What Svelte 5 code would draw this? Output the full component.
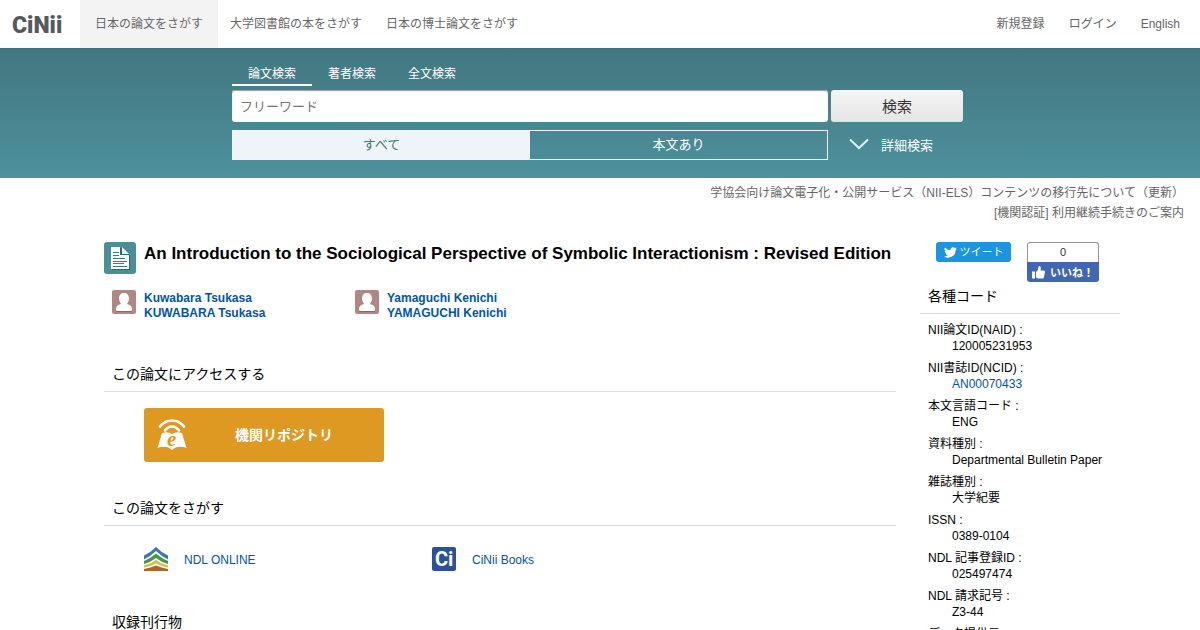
<script lang="ts">
  const siteLinks = ["日本の論文をさがす", "大学図書館の本をさがす", "日本の博士論文をさがす"];
  const userLinks = ["新規登録", "ログイン", "English"];
  const searchTabs = ["論文検索", "著者検索", "全文検索"];

  const authors = [
    ["Kuwabara Tsukasa", "KUWABARA Tsukasa"],
    ["Yamaguchi Kenichi", "YAMAGUCHI Kenichi"],
  ];

  const codes = [
    { label: "NII論文ID(NAID)", value: "120005231953" },
    { label: "NII書誌ID(NCID)", value: "AN00070433", link: true },
    { label: "本文言語コード", value: "ENG" },
    { label: "資料種別", value: "Departmental Bulletin Paper" },
    { label: "雑誌種別", value: "大学紀要" },
    { label: "ISSN", value: "0389-0104" },
    { label: "NDL 記事登録ID", value: "025497474" },
    { label: "NDL 請求記号", value: "Z3-44" },
    { label: "データ提供元", value: "NDL  IR" },
  ];

  let activeTab = $state(0);
  let scope = $state("all");
  let keyword = $state("");
</script>

<header class="topbar">
  <a class="logo" href="/" aria-label="CiNii">
    <svg width="56" height="24" viewBox="0 0 56 24" aria-hidden="true">
      <text x="0" y="21">CiNii</text>
    </svg>
  </a>
  <nav class="site-nav">
    {#each siteLinks as label, i}
      <a href="#{i}" class:active={i === 0}>{label}</a>
    {/each}
  </nav>
  <nav class="user-nav">
    {#each userLinks as label}
      <a href="#user">{label}</a>
    {/each}
  </nav>
</header>

<section class="hero">
  <form class="search" onsubmit={(e) => e.preventDefault()}>
    <div class="tabs">
      {#each searchTabs as tab, i}
        <button type="button" class="tab" class:active={activeTab === i} onclick={() => (activeTab = i)}>
          {tab}
        </button>
      {/each}
    </div>
    <div class="search-row">
      <input class="keyword" type="text" placeholder="フリーワード" aria-label="フリーワード" bind:value={keyword} />
      <button class="submit" type="submit">検索</button>
    </div>
    <div class="search-row">
      <div class="scope">
        <label class:checked={scope === "all"}>
          <input type="radio" name="scope" value="all" bind:group={scope} />すべて
        </label>
        <label class:checked={scope === "fulltext"}>
          <input type="radio" name="scope" value="fulltext" bind:group={scope} />本文あり
        </label>
      </div>
      <button class="advanced" type="button">
        <svg width="20" height="12" viewBox="0 0 20 12" aria-hidden="true">
          <path d="M1 1.5L10 10L19 1.5" fill="none" stroke="#d9f6fb" stroke-width="2" />
        </svg>
        詳細検索
      </button>
    </div>
  </form>
</section>

<div class="notices">
  <a href="#els">学協会向け論文電子化・公開サービス（NII-ELS）コンテンツの移行先について（更新）</a>
  <a href="#auth">[機関認証] 利用継続手続きのご案内</a>
</div>

<div class="content">
  <main>
    <div class="title-row">
      <svg width="32" height="32" viewBox="0 0 32 32" aria-hidden="true">
        <rect width="32" height="32" rx="3" fill="#4b8e98" />
        <path d="M8 6H18L26 14V28H8Z" fill="#2f6871" />
        <path d="M7 5H16V13H25V27H7Z" fill="#fff" />
        <path d="M18 5L25 12H18Z" fill="#fff" />
        <path d="M9 10.5H15M9 13.5H15M9 16.5H21M9 19.5H23M9 21.5H20M9 24.5H23" stroke="#3c7c86" />
      </svg>
      <h1>An Introduction to the Sociological Perspective of Symbolic Interactionism : Revised Edition</h1>
    </div>

    <ul class="authors">
      {#each authors as names}
        <li>
          <svg width="24" height="24" viewBox="0 0 24 24" aria-hidden="true">
            <rect width="24" height="24" rx="2" fill="#b08784" />
            <path
              d="M12 4C15 4 17 6 17 9.500C17 12 16 14 14.500 15V16C18 17 20 17.500 20 19.500V20.500Q20 22 19 22H5Q4 22 4 20.500V19.500C4 17.500 6 17 9.500 16V15C8 14 7 12 7 9.500C7 6 9 4 12 4Z"
              fill="#8d6562"
            />
            <path
              d="M12 3C15 3 17 5 17 8.500C17 11 16 13 15 14C18 15 20 16 20 18.500V19.500Q20 21 19 21H5Q4 21 4 19.500V18.500C4 16 6 15 9 14C8 13 7 11 7 8.500C7 5 9 3 12 3Z"
              fill="#fff"
            />
          </svg>
          <a href="#author">
            {#each names as name}<span>{name}</span>{/each}
          </a>
        </li>
      {/each}
    </ul>

    <section>
      <h2>この論文にアクセスする</h2>
      <a class="repository" href="#repository">
        <svg width="32" height="34" viewBox="0 0 32 34" aria-hidden="true">
          <g fill="none" stroke="#fff" stroke-width="2.6" stroke-linecap="round">
            <path d="M4 8.500Q9 2.500 16 2.500T28 8.500" />
            <path d="M9 12.500Q12 8.500 16 8.500T23 12.500" />
          </g>
          <path d="M6 15Q12 13 16 16Q20 13 26 15L30.500 30Q27 28 21 29Q18 30 16 32Q14 30 11 29Q5 28 1.500 30Z" fill="#fff" />
          <text class="e-mark" x="11" y="28">e</text>
        </svg>
        <span>機関リポジトリ</span>
      </a>
    </section>

    <section>
      <h2>この論文をさがす</h2>
      <ul class="finders">
        <li>
          <svg width="24" height="24" viewBox="0 0 24 24" aria-hidden="true">
            <path d="M0 8.500Q6 6 12 0Q18 6 24 8.500V12.500Q17 9 12 4Q7 9 0 12.500Z" fill="#3f79a9" />
            <path d="M0 14Q7 11 12 6.500Q17 11 24 14V17Q17 15 12 11Q7 15 0 17Z" fill="#4b9250" />
            <path d="M0 18.500Q7 17 12 13Q17 17 24 18.500V20.500Q17 19 12 16.500Q7 19 0 20.500Z" fill="#d7bd41" />
            <path d="M0 22Q7 20.500 12 18.500Q17 20.500 24 22V24H0Z" fill="#ad652e" />
          </svg>
          <a href="#ndl">NDL ONLINE</a>
        </li>
        <li>
          <svg width="24" height="24" viewBox="0 0 24 24" aria-hidden="true">
            <rect width="24" height="24" rx="2" fill="#2b5299" />
            <text class="books-mark" x="3" y="19">Ci</text>
          </svg>
          <a href="#books">CiNii Books</a>
        </li>
      </ul>
    </section>

    <section>
      <h2>収録刊行物</h2>
    </section>
  </main>

  <aside>
    <div class="social">
      <a class="tweet" href="#tweet">
        <svg width="13" height="11" viewBox="0 0 24 20" aria-hidden="true">
          <path
            d="M24 2.400a10 10 0 0 1-2.800.8A5 5 0 0 0 23.300.4a10 10 0 0 1-3.100 1.200A5 5 0 0 0 11.800 6 14 14 0 0 1 1.700.9a5 5 0 0 0 1.500 6.600A5 5 0 0 1 1 6.900a5 5 0 0 0 4 4.900 5 5 0 0 1-2.200.1 5 5 0 0 0 4.600 3.400A10 10 0 0 1 0 17.300 14 14 0 0 0 21.500 4.900 10 10 0 0 0 24 2.400Z"
            fill="#fff"
          />
        </svg>
        ツイート
      </a>
      <div class="like">
        <span class="like-count">0</span>
        <button type="button">
          <svg width="13" height="13" viewBox="0 0 13 13" aria-hidden="true">
            <path d="M0 5.500H3V12.500H0ZM4 6Q6.500 4 6.500 1Q6.500 0 7.500 0Q9.500 .5 8.500 4.500H12Q13 4.500 13 6L12 11Q11.700 12.500 10.500 12.500H6L4 11.500Z" fill="#fff" />
          </svg>
          いいね！
        </button>
      </div>
    </div>
    <h2>各種コード</h2>
    <dl>
      {#each codes as code}
        <dt>{code.label} :</dt>
        <dd>
          {#if code.link}<a href="#ncid">{code.value}</a>{:else}{code.value}{/if}
        </dd>
      {/each}
    </dl>
  </aside>
</div>

<style>
  :global(body) {
    background: #fff;
    color: #000;
    font: 12px/16px "Liberation Sans", "Noto Sans CJK JP", sans-serif;
  }

  a {
    color: #0055aa;
    text-decoration: none;
  }

  button,
  input {
    font-family: inherit;
  }

  button {
    border: 0;
    padding: 0;
    cursor: pointer;
  }

  ul,
  dl,
  dd,
  h1,
  h2 {
    margin: 0;
    padding: 0;
    list-style: none;
  }

  svg {
    display: block;
    flex: none;
  }

  .topbar {
    display: flex;
    height: 48px;
  }

  .topbar nav {
    display: flex;
  }

  .topbar nav a {
    box-sizing: border-box;
    height: 48px;
    padding: 0 12px;
    color: #666;
    line-height: 49px;
  }

  .topbar .site-nav .active {
    padding: 0 15px;
    background: #f3f3f3;
  }

  .topbar .user-nav {
    margin-left: auto;
    padding-right: 8px;
  }

  .logo {
    display: flex;
    align-items: center;
    box-sizing: border-box;
    width: 80px;
    padding-left: 12px;
  }

  .logo text {
    font: 900 23px Roboto, sans-serif;
    fill: #565a5f;
  }

  .hero {
    padding: 14px 16px 18px;
    background: linear-gradient(#427780, #4d919d);
    box-shadow: inset 0 1px 0 #3d707a;
  }

  .search {
    display: grid;
    gap: 8px;
    max-width: 736px;
    margin: 0 auto;
  }

  .tabs {
    display: flex;
    margin-bottom: -4px;
  }

  .tab {
    padding: 2px 16px 0;
    border-bottom: 2px solid transparent;
    background: none;
    color: #fff;
    font-size: 12px;
    line-height: 20px;
  }

  .tab.active {
    border-color: #fff;
  }

  .search-row {
    display: grid;
    grid-template-columns: 1fr 132px;
    gap: 3px;
    padding-right: 5px;
  }

  .keyword {
    box-sizing: border-box;
    min-width: 0;
    height: 32px;
    padding: 0 8px;
    border: 0;
    border-radius: 3px;
    background: #fff;
    box-shadow: inset 0 1px 1px #999;
    font-size: 13px;
  }

  .keyword::placeholder {
    color: #757575;
  }

  .submit {
    padding-bottom: 2px;
    border-radius: 3px;
    background: linear-gradient(#f5f5f5, #e5e5e5);
    color: #333;
    font-size: 15px;
  }

  .scope {
    display: grid;
    grid-template-columns: 1fr 1fr;
    border: 1px solid #eef4f7;
    color: #fff;
    font-size: 13px;
    line-height: 28px;
    text-align: center;
  }

  .scope label {
    position: relative;
    cursor: pointer;
  }

  .scope .checked {
    background: #eef4f7;
    color: #427780;
  }

  .scope input {
    position: absolute;
    opacity: 0;
  }

  .advanced {
    display: flex;
    align-items: center;
    gap: 12px;
    padding: 0 0 2px 18px;
    background: none;
    color: #fff;
    font-size: 13px;
  }

  .notices {
    display: flex;
    flex-direction: column;
    align-items: flex-end;
    padding: 5px 16px 19px;
    line-height: 20px;
  }

  .notices a {
    color: #666;
  }

  .content {
    display: grid;
    grid-template-columns: 1fr 200px;
    gap: 24px;
    box-sizing: border-box;
    max-width: 1040px;
    margin: 0 auto;
    padding-left: 24px;
  }

  .title-row {
    display: flex;
    gap: 8px;
  }

  h1 {
    font-size: 17px;
    line-height: 24px;
  }

  .authors {
    display: flex;
    gap: 16px;
    margin-top: 16px;
    padding-left: 8px;
  }

  .authors li {
    display: flex;
    gap: 8px;
    width: 227px;
    font-weight: 700;
    line-height: 15px;
  }

  .authors a {
    padding-top: 1px;
  }

  .authors span {
    display: block;
  }

  section h2,
  aside h2 {
    padding: 0 8px 7px;
    border-bottom: 1px solid #ddd;
    font-size: 14px;
    font-weight: 400;
    line-height: 20px;
  }

  main section {
    margin-top: 36px;
  }

  .authors + section {
    margin-top: 43px;
  }

  .repository {
    display: flex;
    align-items: center;
    box-sizing: border-box;
    width: 240px;
    height: 54px;
    margin: 16px 0 0 40px;
    padding: 0 4px 0 12px;
    border-radius: 3px;
    background: #dd9922;
    color: #fff;
    font-size: 14px;
    font-weight: 700;
  }

  .repository span {
    flex: 1;
    text-align: center;
  }

  .e-mark {
    font: italic 700 21px "Liberation Serif", serif;
    fill: #dd9922;
  }

  .finders {
    display: grid;
    grid-template-columns: 288px 288px;
    margin-top: 16px;
    padding-left: 40px;
  }

  .finders li {
    display: flex;
    align-items: center;
    gap: 16px;
    height: 34px;
  }

  .finders a {
    line-height: 18px;
    padding-top: 1px;
  }

  .books-mark {
    font: 700 20px Roboto, sans-serif;
    fill: #fff;
  }

  .social {
    display: flex;
    align-items: flex-start;
    gap: 16px;
    padding-left: 16px;
  }

  .tweet {
    display: flex;
    align-items: center;
    justify-content: center;
    gap: 3px;
    width: 75px;
    height: 20px;
    border-radius: 3px;
    background: #1b95e0;
    color: #fff;
    font-size: 11px;
  }

  .like {
    width: 72px;
    text-align: center;
  }

  .like-count {
    display: block;
    border: 1px solid #90949c;
    border-bottom: 0;
    border-radius: 3px 3px 0 0;
    color: #333;
    font-size: 11px;
    line-height: 19px;
  }

  .like button {
    display: flex;
    align-items: center;
    justify-content: center;
    gap: 5px;
    width: 100%;
    height: 20px;
    border-radius: 0 0 3px 3px;
    background: #4267b2;
    color: #fff;
    font-size: 11px;
    font-weight: 700;
    white-space: nowrap;
  }

  aside h2 {
    margin-top: 4px;
  }

  dl {
    padding: 8px 8px 0;
  }

  dd {
    margin: 0 0 6px 24px;
  }
</style>
